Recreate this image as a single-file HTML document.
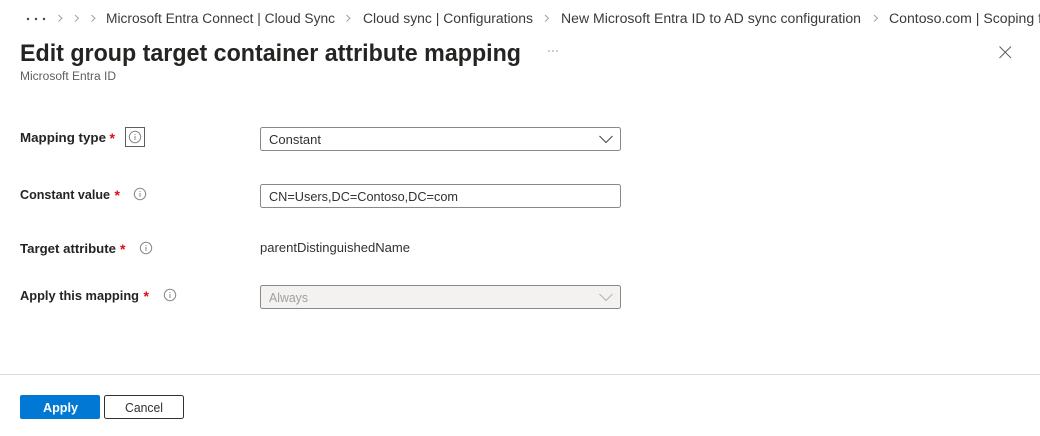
<!DOCTYPE html>
<html lang="en">
<head>
<meta charset="utf-8">
<title>Edit group target container attribute mapping</title>
<style>
html,body{margin:0;padding:0;background:#fff;width:1040px;height:436px;overflow:hidden}
svg{display:block;font-family:"Liberation Sans",sans-serif}
.bc{font-size:13.5px;fill:#3b3a39}
.lab{font-size:13px;font-weight:700;fill:#252423}
.req{font-size:14px;font-weight:700;fill:#e00b1c}
.val{font-size:13px;fill:#323130}
.chev{fill:none;stroke:#a19f9d;stroke-width:1}
.box{fill:#fff;stroke:#8a8886;stroke-width:1}
.info circle{fill:none;stroke:#8a8886;stroke-width:1}
.info path{fill:none;stroke:#8a8886;stroke-width:1}
</style>
</head>
<body>
<svg width="1040" height="436" viewBox="0 0 1040 436" xmlns="http://www.w3.org/2000/svg">
<rect width="1040" height="436" fill="#fff"/>

<circle cx="28" cy="19" r="1.2" fill="#444"/>
<circle cx="36" cy="19" r="1.2" fill="#444"/>
<circle cx="44" cy="19" r="1.2" fill="#444"/>
<path class="chev" d="M58.500 15l3.500 3.250-3.500 3.250M75 15l3.500 3.250-3.500 3.250M91.500 15l3.500 3.250-3.500 3.250M346.500 15l3.500 3.250-3.500 3.250M545 15l3.500 3.250-3.500 3.250M874 15l3.500 3.250-3.500 3.250"/>
<text class="bc" x="106" y="23" textLength="229" lengthAdjust="spacingAndGlyphs">Microsoft Entra Connect | Cloud Sync</text>
<text class="bc" x="363" y="23" textLength="170" lengthAdjust="spacingAndGlyphs">Cloud sync | Configurations</text>
<text class="bc" x="561" y="23" textLength="300" lengthAdjust="spacingAndGlyphs">New Microsoft Entra ID to AD sync configuration</text>
<text class="bc" x="889" y="23" textLength="153" lengthAdjust="spacingAndGlyphs">Contoso.com | Scoping f</text>

<text x="20" y="61" font-size="24" font-weight="700" fill="#252423" textLength="501" lengthAdjust="spacingAndGlyphs">Edit group target container attribute mapping</text>
<text x="20" y="80" font-size="11.5" fill="#605e5c" textLength="96" lengthAdjust="spacingAndGlyphs">Microsoft Entra ID</text>
<circle cx="549" cy="51" r=".6" fill="#555"/><circle cx="553" cy="51" r=".6" fill="#555"/><circle cx="557" cy="51" r=".6" fill="#555"/>
<path d="M999.500 46.500l11.500 11.500M1011 46.500l-11.500 11.500" fill="none" stroke="#605e5c" stroke-width="1"/>

<text class="lab" x="20" y="142" textLength="86" lengthAdjust="spacingAndGlyphs">Mapping type</text>
<text class="req" x="109.500" y="143">*</text>
<rect x="125.500" y="127.500" width="19" height="19" fill="none" stroke="#605e5c" stroke-width="1"/>
<g class="info"><circle cx="135" cy="137" r="5.700"/><path d="M135 136v4M135 134v1"/></g>

<text class="lab" x="20" y="199" textLength="90" lengthAdjust="spacingAndGlyphs">Constant value</text>
<text class="req" x="114.500" y="200">*</text>
<g class="info"><circle cx="140" cy="194" r="5.700"/><path d="M140 193v4M140 191v1"/></g>

<text class="lab" x="20" y="253" textLength="96" lengthAdjust="spacingAndGlyphs">Target attribute</text>
<text class="req" x="120" y="254">*</text>
<g class="info"><circle cx="146" cy="248" r="5.700"/><path d="M146 247v4M146 245v1"/></g>

<text class="lab" x="20" y="300" textLength="119" lengthAdjust="spacingAndGlyphs">Apply this mapping</text>
<text class="req" x="143.500" y="301">*</text>
<g class="info"><circle cx="170" cy="295" r="5.700"/><path d="M170 294v4M170 292v1"/></g>

<rect class="box" x="260.500" y="127.500" width="360" height="23" rx="2"/>
<text class="val" x="269" y="144" textLength="52" lengthAdjust="spacingAndGlyphs">Constant</text>
<path d="M599.500 136l6.500 6.500 6.500-6.500" fill="none" stroke="#444" stroke-width="1"/>

<rect class="box" x="260.500" y="184.500" width="360" height="23" rx="2"/>
<text class="val" x="269" y="201" textLength="189" lengthAdjust="spacingAndGlyphs">CN=Users,DC=Contoso,DC=com</text>

<text class="val" x="260" y="252" textLength="150" lengthAdjust="spacingAndGlyphs">parentDistinguishedName</text>

<rect x="260.500" y="285.500" width="360" height="23" rx="2" fill="#f3f2f1" stroke="#8a8886" stroke-width="1"/>
<text x="269" y="302" font-size="13" fill="#a19f9d" textLength="39" lengthAdjust="spacingAndGlyphs">Always</text>
<path d="M599.500 294l6.500 6.500 6.500-6.500" fill="none" stroke="#b5b3b1" stroke-width="1"/>

<rect x="0" y="374" width="1040" height="1" fill="#dcdcdc"/>

<rect x="20" y="395" width="80" height="24" rx="2" fill="#0078d4"/>
<text x="43" y="412" font-size="13" font-weight="700" fill="#fff" textLength="35" lengthAdjust="spacingAndGlyphs">Apply</text>
<rect x="104.500" y="395.500" width="79" height="23" rx="2" fill="#fff" stroke="#323130" stroke-width="1"/>
<text x="125" y="412" font-size="13" fill="#323130" textLength="38" lengthAdjust="spacingAndGlyphs">Cancel</text>
</svg>
</body>
</html>
